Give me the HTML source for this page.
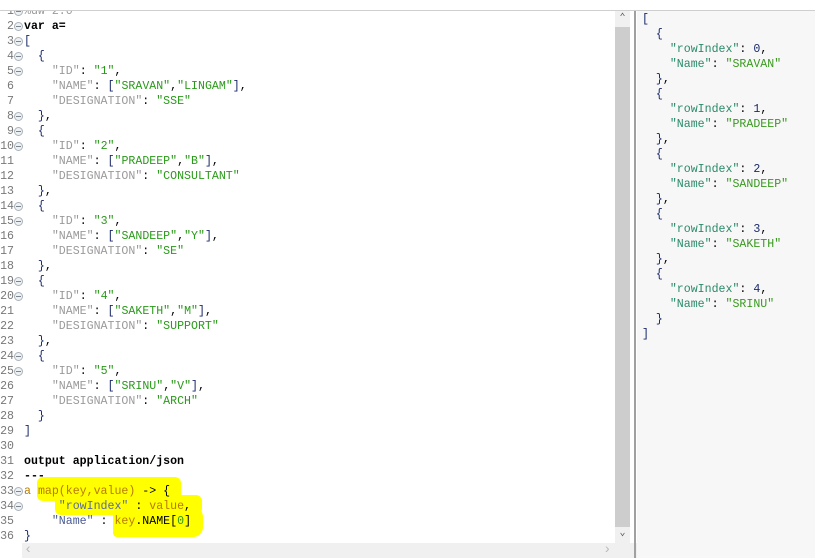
<!DOCTYPE html>
<html><head><style>
body{margin:0;width:815px;height:558px;background:#fff;overflow:hidden;position:relative;font-family:"Liberation Mono",monospace;font-size:11.6px}
.l{position:absolute;white-space:pre;line-height:15px;height:15px}
.n{position:absolute;left:0;width:14px;text-align:right;color:#787878;white-space:pre;line-height:15px}
.f{position:absolute;left:14px;width:7px;height:7px;border:1px solid #aab2ba;border-radius:50%;background:#eef1f4}
.f:after{content:"";position:absolute;left:1px;top:3px;width:5px;height:1px;background:#7b8590}
.k{color:#9a9a9a}.s{color:#2a9a1a}.p{color:#1a2a6a}.b{color:#000;font-weight:bold}.o{color:#b77a00}
.rk{color:#2a8a6a}.rs{color:#3a9a20}
.y{position:absolute;background:#ffff00;border-radius:6px}
</style></head><body>
<div style="position:absolute;left:0;top:0;width:815px;height:10px;background:#fff;border-bottom:1px solid #cfcfcf;z-index:2"></div>
<div style="position:absolute;left:615px;top:11px;width:15px;height:532px;background:#cdcdcd"></div>
<div style="position:absolute;left:615px;top:11px;width:15px;height:16px;background:#f0f0f0;color:#555;font-size:10px;text-align:center;line-height:16px">&#8963;</div>
<div style="position:absolute;left:615px;top:527px;width:15px;height:16px;background:#f0f0f0;color:#555;font-size:10px;text-align:center;line-height:14px">&#8964;</div>
<div style="position:absolute;left:22px;top:543px;width:615px;height:15px;background:#f0f0f0"></div>
<div style="position:absolute;left:24px;top:543px;color:#bbb;font-size:14px;line-height:15px">&lsaquo;</div>
<div style="position:absolute;left:603px;top:543px;color:#bbb;font-size:14px;line-height:15px">&rsaquo;</div>
<div style="position:absolute;left:634px;top:11px;width:2px;height:547px;background:#a0a0a0"></div>
<div style="position:absolute;left:637px;top:11px;width:178px;height:547px;background:#f7f7f7"></div>
<div class="y" style="left:37px;top:477px;width:144px;height:24px"></div>
<div class="y" style="left:55px;top:495px;width:147px;height:20px"></div>
<div class="y" style="left:113px;top:505px;width:90px;height:32px;border-radius:4px 12px 10px 4px"></div>
<div id="ed"></div>
<div id="rp"></div>
<script>
var L=[
['<span class="k">%dw 2.0</span>',1],
['<span class="b">var a=</span>',1],
['<span class="p">[</span>',1],
['  <span class="p">{</span>',1],
['    <span class="k">"ID"</span>: <span class="s">"1"</span>,',1],
['    <span class="k">"NAME"</span>: <span class="p">[</span><span class="s">"SRAVAN"</span>,<span class="s">"LINGAM"</span><span class="p">]</span>,',0],
['    <span class="k">"DESIGNATION"</span>: <span class="s">"SSE"</span>',0],
['  <span class="p">}</span>,',1],
['  <span class="p">{</span>',1],
['    <span class="k">"ID"</span>: <span class="s">"2"</span>,',1],
['    <span class="k">"NAME"</span>: <span class="p">[</span><span class="s">"PRADEEP"</span>,<span class="s">"B"</span><span class="p">]</span>,',0],
['    <span class="k">"DESIGNATION"</span>: <span class="s">"CONSULTANT"</span>',0],
['  <span class="p">}</span>,',0],
['  <span class="p">{</span>',1],
['    <span class="k">"ID"</span>: <span class="s">"3"</span>,',1],
['    <span class="k">"NAME"</span>: <span class="p">[</span><span class="s">"SANDEEP"</span>,<span class="s">"Y"</span><span class="p">]</span>,',0],
['    <span class="k">"DESIGNATION"</span>: <span class="s">"SE"</span>',0],
['  <span class="p">}</span>,',0],
['  <span class="p">{</span>',1],
['    <span class="k">"ID"</span>: <span class="s">"4"</span>,',1],
['    <span class="k">"NAME"</span>: <span class="p">[</span><span class="s">"SAKETH"</span>,<span class="s">"M"</span><span class="p">]</span>,',0],
['    <span class="k">"DESIGNATION"</span>: <span class="s">"SUPPORT"</span>',0],
['  <span class="p">}</span>,',0],
['  <span class="p">{</span>',1],
['    <span class="k">"ID"</span>: <span class="s">"5"</span>,',1],
['    <span class="k">"NAME"</span>: <span class="p">[</span><span class="s">"SRINU"</span>,<span class="s">"V"</span><span class="p">]</span>,',0],
['    <span class="k">"DESIGNATION"</span>: <span class="s">"ARCH"</span>',0],
['  <span class="p">}</span>',0],
['<span class="p">]</span>',0],
['',0],
['<span class="b">output application/json</span>',0],
['<span class="b">---</span>',0],
['<span class="o">a</span> <span class="o">map(key,value)</span> -&gt; {',1],
['     <span style="color:#5a6aa0">"rowIndex"</span> : <span class="o">value</span>,',1],
['    <span style="color:#4a5a90">"Name"</span> : <span class="o">key</span>.NAME[<span class="s">0</span>]',0],
['<span class="p">}</span>',0]];
var h='';
for(var i=0;i<L.length;i++){var y=4+15*i;
h+='<div class="n" style="top:'+y+'px">'+(i+1)+'</div>';
if(L[i][1])h+='<div class="f" style="top:'+(y+3)+'px"></div>';
h+='<div class="l" style="left:24px;top:'+y+'px">'+L[i][0]+'</div>';}
document.getElementById('ed').innerHTML=h;
var R=['<span class="p">[</span>'];
var nm=['SRAVAN','PRADEEP','SANDEEP','SAKETH','SRINU'];
for(var j=0;j<5;j++){R.push('  <span class="p">{</span>');
R.push('    <span class="rk">"rowIndex"</span>: <span class="p">'+j+'</span>,');
R.push('    <span class="rk">"Name"</span>: <span class="rs">"'+nm[j]+'"</span>');
R.push('  <span class="p">}</span>'+(j<4?',':''));}
R.push('<span class="p">]</span>');
h='';for(var i=0;i<R.length;i++)h+='<div class="l" style="left:642px;top:'+(12+15*i)+'px">'+R[i]+'</div>';
document.getElementById('rp').innerHTML=h;
</script>
</body></html>
